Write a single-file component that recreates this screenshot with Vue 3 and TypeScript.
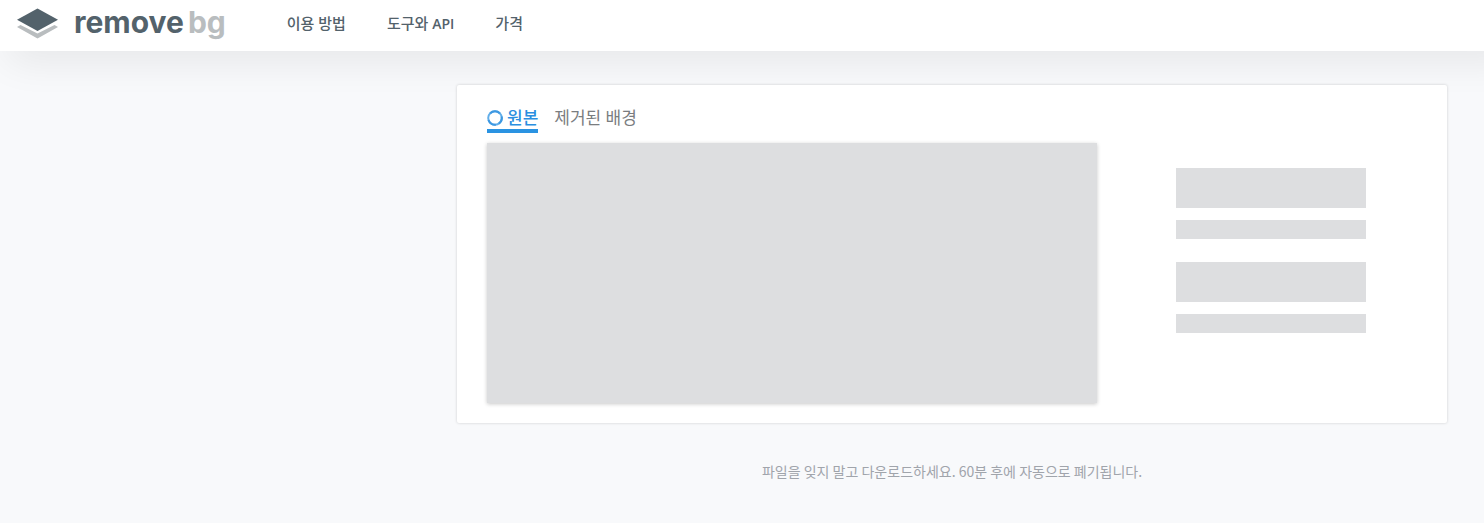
<script setup lang="ts">
import { ref } from 'vue'

interface Tab {
  id: string
  label: string
  loading: boolean
}

interface Link {
  text: string
  latin?: string
}

const links: Link[] = [{ text: '이용 방법' }, { text: '도구와', latin: 'API' }, { text: '가격' }]

const tabs: Tab[] = [
  { id: 'original', label: '원본', loading: true },
  { id: 'removed', label: '제거된 배경', loading: false },
]

const active = ref('original')
</script>

<template>
  <div class="page">
    <header class="header">
      <a class="brand" href="#" aria-label="removebg">
        <svg class="mark" viewBox="0 0 42 32" aria-hidden="true">
          <path d="M0.5 19 L4 17 L21 25.6 L38 17 L41.5 19 L21 30.6 Z" fill="#b9bdbf" />
          <path d="M21 0.5 L41.5 11.8 L21 23 L0.5 11.8 Z" fill="#53626b" />
        </svg>
        <span class="wordmark">remove<span class="suffix">bg</span></span>
      </a>
      <nav class="nav">
        <a v-for="link in links" :key="link.text" class="link" href="#">{{ link.text }}<template v-if="link.latin">{{ ' ' }}<span class="latin">{{ link.latin }}</span></template></a>
      </nav>
    </header>

    <main class="main">
      <section class="card">
        <div class="preview">
          <div class="tabs" role="tablist">
            <button
              v-for="tab in tabs"
              :key="tab.id"
              class="tab"
              :class="{ active: active === tab.id }"
              type="button"
              role="tab"
              :aria-selected="active === tab.id"
              @click="active = tab.id"
            >
              <svg v-if="tab.loading" class="spinner" viewBox="0 0 16 16" aria-hidden="true">
                <circle cx="8" cy="8" r="6.8" fill="none" stroke="#62aee9" stroke-width="2" />
                <path
                  d="M3.2 3.2 A6.8 6.8 0 0 1 12.8 3.2 M14.6 6.4 A6.8 6.8 0 0 1 11.8 13.6 M8.8 14.8 A6.8 6.8 0 0 1 1.5 10"
                  fill="none"
                  stroke="#3d98e2"
                  stroke-width="2"
                />
              </svg>
              <span>{{ tab.label }}</span>
            </button>
          </div>
          <div class="image"></div>
        </div>
        <aside class="actions">
          <div class="group">
            <div class="bar large"></div>
            <div class="bar"></div>
          </div>
          <div class="group">
            <div class="bar large"></div>
            <div class="bar"></div>
          </div>
        </aside>
      </section>
      <p class="notice">파일을 잊지 말고 다운로드하세요. 60분 후에 자동으로 폐기됩니다.</p>
    </main>
  </div>
</template>

<style>
body {
  margin: 0;
  background: #f8f9fb;
}
</style>

<style scoped>
.page {
  min-height: 100vh;
  overflow: hidden;
  background: #f8f9fb;
  font-family: "Open Sans", "Noto Sans CJK KR", sans-serif;
  color: #53626b;
}

.header {
  display: flex;
  align-items: center;
  height: 51px;
  padding: 0 16px;
  margin-right: -40px;
  background: #fff;
  box-shadow: 0 16px 40px -8px rgba(0, 0, 0, 0.09);
}

.brand {
  display: flex;
  align-items: center;
  gap: 15px;
  height: 48px;
  margin-bottom: 3px;
  color: #53626b;
  text-decoration: none;
}

.mark {
  width: 43px;
  height: 32px;
}

.wordmark {
  padding-bottom: 4px;
  font-family: Inter, sans-serif;
  font-size: 30px;
  font-weight: 700;
  line-height: 40px;
}

.suffix {
  margin-left: 4px;
  color: #b9bdbf;
}

.nav {
  display: flex;
  gap: 41px;
  margin-left: 61px;
  margin-bottom: 4px;
}

.link {
  color: #53626b;
  font-size: 15px;
  font-weight: 500;
  line-height: 24px;
  text-decoration: none;
}

.latin {
  font-size: 14px;
  font-weight: 600;
}

.main {
  padding: 34px 37px 40px 457px;
}

.card {
  display: flex;
  gap: 27px;
  padding: 20px 30px;
  background: #fff;
  border-radius: 2px;
  box-shadow: 0 0 3px rgba(0, 0, 0, 0.18);
}

.preview {
  flex: 1;
}

.tabs {
  display: flex;
  gap: 16px;
  margin-bottom: 10px;
}

.tab {
  display: flex;
  align-items: center;
  gap: 4px;
  height: 28px;
  padding: 2px 0 0;
  border: 0;
  border-bottom: 4px solid transparent;
  background: none;
  color: #7a7d80;
  font-family: inherit;
  font-size: 17px;
  line-height: 22px;
}

.active {
  border-bottom-color: #2a93e2;
  color: #2a8fe0;
  font-weight: 500;
}

.spinner {
  width: 16px;
  height: 16px;
}

.image {
  height: 260px;
  background: #dddee0;
  box-shadow: 0 1px 4px rgba(0, 0, 0, 0.22);
}

.actions {
  display: flex;
  flex-direction: column;
  align-items: center;
  gap: 23px;
  width: 293px;
  padding-top: 63px;
}

.group {
  display: flex;
  flex-direction: column;
  gap: 12px;
  width: 190px;
}

.bar {
  height: 19px;
  background: #dddee0;
}

.large {
  height: 40px;
}

.notice {
  margin: 36px 0 0;
  color: #a0a4ab;
  font-family: "Noto Sans CJK KR", sans-serif;
  font-size: 14px;
  line-height: 24px;
  text-align: center;
}
</style>
